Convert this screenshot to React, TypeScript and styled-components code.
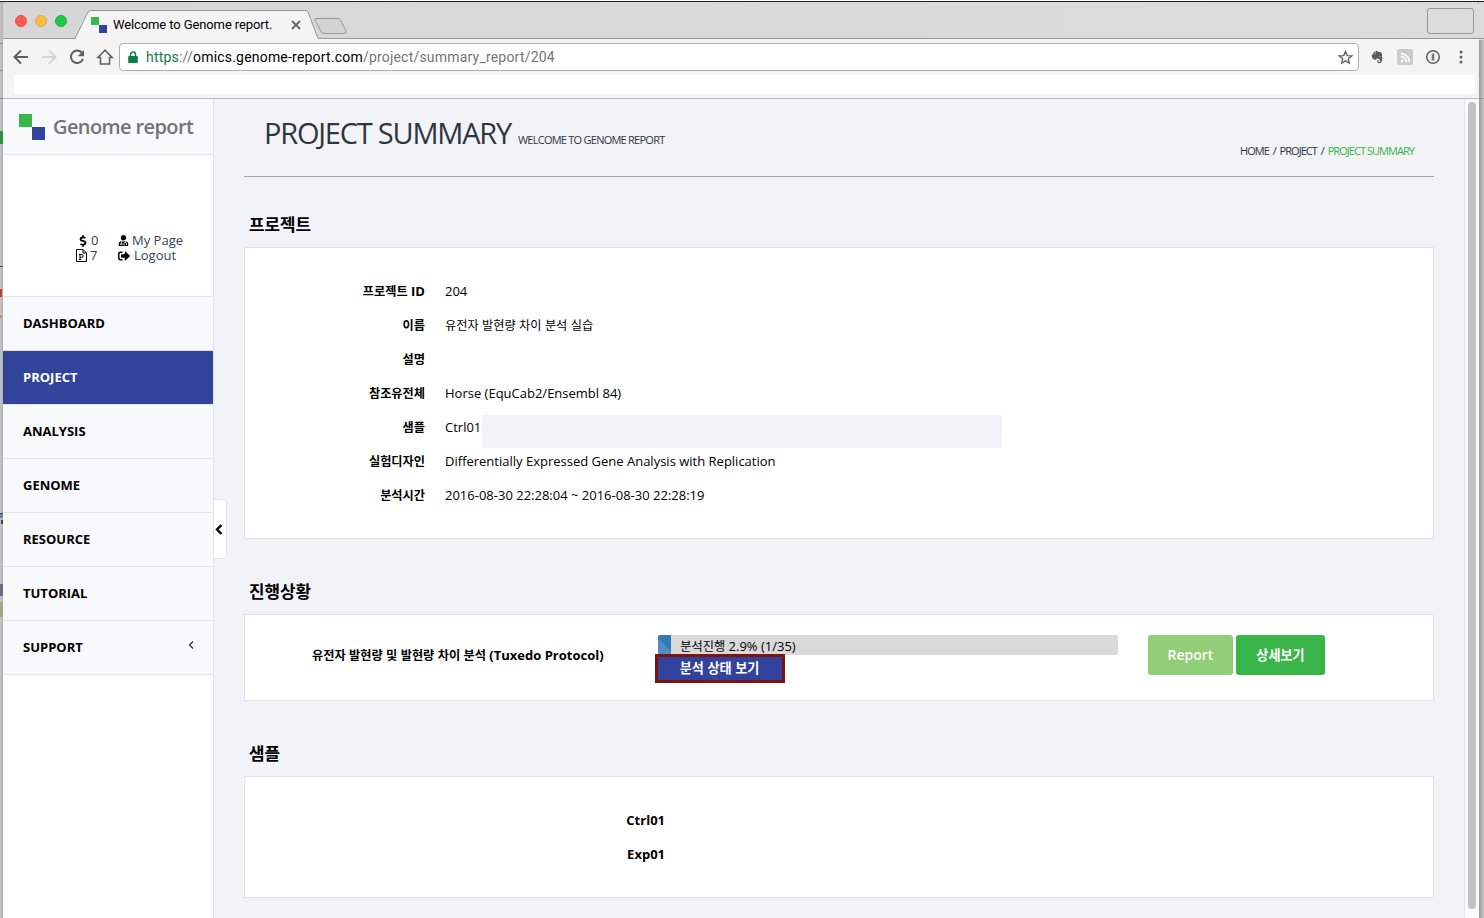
import React from 'react';
import styled, { createGlobalStyle, css } from 'styled-components';
import { FaDollarSign, FaUserMd, FaRss, FaSignOutAlt, FaEvernote } from 'react-icons/fa';

const Global = createGlobalStyle`
  * { box-sizing: border-box; }
  body { margin: 0; background: #c4c4c4; font-family: 'Open Sans', 'Noto Sans CJK KR', sans-serif; font-size: 13px; color: #000; }
`;

const Desktop = styled.div`
  height: 918px;
  overflow: hidden;
  padding: 2px 5px 0 3px;
  background:
    linear-gradient(#1c1c1c, #1c1c1c) 0 1px / 1484px 1px no-repeat,
    linear-gradient(#fff, #fff) 0 0 / 1484px 1px no-repeat,
    linear-gradient(#2c9346, #2c9346) 0 131px / 3px 13px no-repeat,
    linear-gradient(#4a4a40, #4a4a40) 0 266px / 3px 1px no-repeat,
    linear-gradient(#c03a35, #c03a35) 0 289px / 2px 8px no-repeat,
    linear-gradient(#c98a62, #c98a62) 0 315px / 2px 3px no-repeat,
    linear-gradient(#444, #444) 0 513px / 3px 1px no-repeat,
    linear-gradient(#5d86ad, #5d86ad) 0 514px / 3px 4px no-repeat,
    linear-gradient(#444, #444) 1px 520px / 2px 4px no-repeat,
    linear-gradient(#666f7a, #666f7a) 0 584px / 3px 12px no-repeat,
    linear-gradient(#a4a68c, #a4a68c) 0 602px / 3px 15px no-repeat,
    linear-gradient(#8a8a8a, #8a8a8a) 0 43px / 3px 1px no-repeat,
    linear-gradient(#8a8a8a, #8a8a8a) 0 70px / 3px 1px no-repeat,
    linear-gradient(#8a8a8a, #8a8a8a) 0 98px / 3px 1px no-repeat,
    linear-gradient(#999, #999) 1479px 38px / 5px 1px no-repeat,
    linear-gradient(#999, #999) 1479px 98px / 5px 1px no-repeat,
    linear-gradient(to right, #999, #ccc) 1479px 40px / 5px 878px no-repeat,
    linear-gradient(#dcdcdc, #dcdcdc) 1479px 2px / 5px 40px no-repeat,
    linear-gradient(to right, #c6c6c6, #b0b0b0) 0 0 / 3px 918px no-repeat,
    #c4c4c4;
`;
const Window = styled.div`
  height: 916px;
  display: flex;
  flex-direction: column;
  border-radius: 5px 5px 0 0;
  overflow: hidden;
  background: #f4f4f4;
`;
const TabBar = styled.div`
  height: 37px;
  flex: none;
  display: flex;
  background: linear-gradient(to right, #d6d6d6, #dcdcdc);
  border-bottom: 1px solid #979797;
`;
const Lights = styled.div`
  display: flex;
  gap: 8px;
  padding: 13px 0 0 12px;
  width: 72px;
`;
const Light = styled.i<{ $c: string; $b: string }>`
  width: 12px;
  height: 12px;
  border-radius: 50%;
  background: ${(p) => p.$c};
  border: 1px solid ${(p) => p.$b};
`;
const Tab = styled.div`
  position: relative;
  width: 243px;
  height: 37px;
  display: flex;
  align-items: center;
  padding: 8px 0 0 16px;
  font: 13px Roboto, sans-serif;
`;
const TabShape = styled.svg`
  position: absolute;
  left: 0;
  top: 0;
`;
const TabTitle = styled.span`
  position: relative;
  margin-left: 6px;
  width: 161px;
  white-space: nowrap;
  letter-spacing: -0.11px;
`;
const TabIcon = styled.svg`
  position: relative;
  flex: none;
`;
const NewTab = styled.svg`
  margin: 15px 0 0 -5px;
`;
const Spacer = styled.div`
  flex: 1;
`;
const ProfileBox = styled.div`
  width: 47px;
  height: 26px;
  margin: 6px 5px 0 0;
  border: 1px solid #979797;
  border-radius: 3px;
`;
const Toolbar = styled.div`
  height: 36px;
  flex: none;
  display: flex;
  align-items: center;
  padding-left: 9px;
`;
const NavIcon = styled.svg`
  flex: none;
  margin-right: 10px;
`;
const Address = styled.div`
  width: 1240px;
  height: 28px;
  margin-left: -5px;
  border: 1px solid #b0b0b0;
  border-radius: 4px;
  background: #fff;
  display: flex;
  align-items: center;
  padding: 0 5px 0 8px;
  font: 14px Roboto, sans-serif;
  color: #757575;
`;
const Url = styled.span`
  margin-left: 8px;
  flex: 1;
  white-space: nowrap;
  letter-spacing: 0.2px;
  b { font-weight: 400; color: #0b8043; }
  em { font-style: normal; color: #000; }
`;
const Extensions = styled.div`
  display: flex;
  align-items: center;
  margin-left: 11px;
  color: #5a5a5a;
`;
const RssBadge = styled.span`
  width: 16px;
  height: 16px;
  margin: 0 12px 0 13px;
  border-radius: 2px;
  background: #cbcbcb;
  color: #fff;
  display: grid;
  place-items: center;
`;
const MenuDots = styled.svg`
  margin-left: 18px;
`;
const BookmarkBar = styled.div`
  height: 24px;
  flex: none;
  border-bottom: 1px solid #b9b9bb;
  padding: 0 4px 4px 11px;
  &::before { content: ''; display: block; height: 19px; background: #fff; }
`;
const Page = styled.div`
  flex: 1;
  display: flex;
  min-height: 0;
  background: #f1f3f7;
`;
const Sidebar = styled.aside`
  position: relative;
  width: 211px;
  flex: none;
  background: #fff;
  border-right: 1px solid #e2e3e6;
`;
const Brand = styled.div`
  height: 56px;
  background: #f8f9fb;
  border-bottom: 1px solid #e2e3e5;
  display: flex;
  align-items: center;
  padding-left: 16px;
  font-size: 20px;
  font-weight: 600;
  color: #737476;
  span { margin-left: 8px; letter-spacing: -0.6px; white-space: nowrap; }
`;
const UserArea = styled.div`
  height: 142px;
  border-bottom: 1px solid #e2e3e5;
  padding: 78px 0 0 72px;
  display: grid;
  grid-template-columns: 43px 1fr;
  grid-auto-rows: 15px;
  line-height: 15px;
  color: #34425a;
`;
const UserItem = styled.span<{ $indent?: number; $gap: number }>`
  display: flex;
  align-items: center;
  gap: ${(p) => p.$gap}px;
  padding-left: ${(p) => p.$indent || 0}px;
  white-space: nowrap;
  svg { color: #000; flex: none; }
`;
const MenuItem = styled.div<{ $active?: boolean }>`
  height: 54px;
  display: flex;
  align-items: center;
  justify-content: space-between;
  padding: 0 19px 2px 20px;
  font-weight: 700;
  background: ${(p) => (p.$active ? '#32439b' : '#f8f9fb')};
  color: ${(p) => (p.$active ? '#fff' : '#000')};
  border-bottom: 1px solid #e2e3e5;
`;
const MenuChevron = styled.svg`
  margin-bottom: 4px;
`;
const Collapse = styled.div`
  position: absolute;
  left: 211px;
  top: 400px;
  width: 13px;
  height: 60px;
  border: 1px solid #e2e3e6;
  border-left: 0;
  border-radius: 0 5px 5px 0;
  background: #fff;
  padding: 24px 0 0 1px;
  svg { display: block; }
`;
const Main = styled.main`
  flex: 1;
  padding: 0 30px;
`;
const PageHead = styled.header`
  height: 78px;
  border-bottom: 1px solid #a3a5a7;
  display: flex;
  justify-content: space-between;
  padding: 14px 20px 0 20px;
`;
const Title = styled.h1`
  margin: 0;
  font-size: 29px;
  line-height: 40px;
  font-weight: 400;
  letter-spacing: -1.22px;
  color: #2f353f;
  white-space: nowrap;
  small { font-size: 11px; letter-spacing: -0.75px; margin-left: 7px; }
`;
const Crumbs = styled.nav`
  margin-top: 30px;
  font-size: 11px;
  line-height: 16px;
  letter-spacing: -0.95px;
  color: #2f353f;
  white-space: pre;
  b { font-weight: 400; color: #35b34a; }
`;
const SectionTitle = styled.h2<{ $top: number }>`
  margin: ${(p) => p.$top}px 0 0 5px;
  height: 24px;
  line-height: 26px;
  font-size: 18px;
  font-weight: 700;
`;
const Card = styled.section<{ $h: number; $pad?: number }>`
  height: ${(p) => p.$h}px;
  margin-top: 12px;
  background: #fff;
  border: 1px solid #e2e3e6;
  padding-top: ${(p) => p.$pad || 0}px;
`;
const Field = styled.div`
  position: relative;
  height: 34px;
  line-height: 34px;
  display: grid;
  grid-template-columns: 180px 1fr;
  column-gap: 20px;
`;
const Label = styled.span`
  font-weight: 700;
  text-align: right;
`;
const Value = styled.span`
  white-space: nowrap;
`;
const Mask = styled.i`
  position: absolute;
  left: 237px;
  top: 5px;
  width: 520px;
  height: 33px;
  background: #f1f3f7;
`;
const Progress = styled.div`
  display: flex;
  align-items: flex-start;
  padding-top: 20px;
`;
const Protocol = styled.strong`
  width: 413px;
  padding-left: 67px;
  line-height: 40px;
  white-space: nowrap;
`;
const Status = styled.div`
  width: 490px;
`;
const Bar = styled.div`
  width: 460px;
  height: 20px;
  border-radius: 2px;
  background: #d9d9d9;
  display: flex;
  overflow: hidden;
  line-height: 22px;
  > span { margin-left: 9px; }
`;
const Fill = styled.i`
  background: linear-gradient(45deg, #4f8dc3 50%, #337ab7 50%);
`;
const StateButton = styled.button`
  display: block;
  width: 130px;
  height: 29px;
  margin: -1px 0 0 -3px;
  position: relative;
  border: 3px solid #80130f;
  background: #32439b;
  color: #fff;
  font: 700 14px/20px 'Open Sans', 'Noto Sans CJK KR', sans-serif;
  padding: 0 1px 2px 0;
`;
const Button = styled.button<{ $w: number; $light?: boolean }>`
  width: ${(p) => p.$w}px;
  height: 40px;
  margin-right: 3px;
  border: 0;
  border-radius: 3px;
  padding: 0 0 1px;
  color: #fff;
  background: #3ab54a;
  font: 600 14px 'Open Sans', 'Noto Sans CJK KR', sans-serif;
  ${(p) => p.$light && css`background: #92ce77;`}
`;
const Sample = styled.div`
  height: 34px;
  line-height: 34px;
  width: 420px;
  text-align: right;
  font-weight: 700;
`;
const Track = styled.div`
  width: 15px;
  flex: none;
  border-left: 1px solid #e4e4e4;
  background: #fafafa;
  padding: 3px 0 0 3px;
`;
const Thumb = styled.div`
  width: 8px;
  height: 807px;
  border-radius: 4px;
  background: #c1c1c1;
`;
const Hangul = styled.span`
  font-size: 0.938em;
`;

const Ko = ({ children }: { children: string }) => (
  <span>
    {children.split(/([\uac00-\ud7a3]+)/).map((part, i) => (i % 2 ? <Hangul key={i}>{part}</Hangul> : part))}
  </span>
);

const fields = [
  ['프로젝트 ID', '204'],
  ['이름', '유전자 발현량 차이 분석 실습'],
  ['설명', ''],
  ['참조유전체', 'Horse (EquCab2/Ensembl 84)'],
  ['샘플', 'Ctrl01'],
  ['실험디자인', 'Differentially Expressed Gene Analysis with Replication'],
  ['분석시간', '2016-08-30 22:28:04 ~ 2016-08-30 22:28:19'],
];
const menu = ['DASHBOARD', 'PROJECT', 'ANALYSIS', 'GENOME', 'RESOURCE', 'TUTORIAL', 'SUPPORT'];

const Logo = ({ size }: { size: number }) => (
  <TabIcon width={size} height={size} viewBox="0 0 26 26">
    <path fill="#3ab54a" d="M0 0h13v13H0z" />
    <path fill="#32439b" d="M13 13h13v13H13z" />
  </TabIcon>
);

const Chrome = () => (
  <>
    <TabBar>
      <Lights>
        <Light $c="#fc5753" $b="#e8504c" />
        <Light $c="#fdbc40" $b="#e6a935" />
        <Light $c="#1fc84a" $b="#1bb042" />
      </Lights>
      <Tab>
        <TabShape width="243" height="37">
          <path d="M0 36.5 L13 10 Q14 8.5 16 8.5 H230 Q232 8.5 233 10 L243 36.5 V37 H0Z" fill="#f4f4f4" />
          <path d="M0 36.5 L13 10 Q14 8.5 16 8.5 H230 Q232 8.5 233 10 L243 36.5" fill="none" stroke="#979797" />
        </TabShape>
        <Logo size={16} />
        <TabTitle>Welcome to Genome report.</TabTitle>
        <TabIcon width="28" height="10" viewBox="0 0 28 10">
          <path d="M18 1l8 8M26 1l-8 8" stroke="#666" strokeWidth="1.8" />
        </TabIcon>
      </Tab>
      <NewTab width="36" height="18">
        <path d="M3 1.5 H24 Q26.500 1.500 27.500 3 L33 14 Q34 16.500 31 16.500 H12 Q9 16.500 8 14.500 L2 3 Q1.500 1.500 3 1.500Z" fill="#d4d4d4" stroke="#979797" />
      </NewTab>
      <Spacer />
      <ProfileBox />
    </TabBar>
    <Toolbar>
      <NavIcon width="18" height="18" viewBox="0 0 18 18" fill="none" stroke="#5f5f5f" strokeWidth="2">
        <path d="M16 9H3M9 2.500L2.500 9 9 15.500" />
      </NavIcon>
      <NavIcon width="18" height="18" viewBox="0 0 18 18" fill="none" stroke="#d5d5d5" strokeWidth="2">
        <path d="M2 9h13M9 2.500L15.500 9 9 15.500" />
      </NavIcon>
      <NavIcon width="18" height="18" viewBox="0 0 18 18">
        <path d="M14.200 5.200A6.200 6.200 0 1 0 15 10.800" fill="none" stroke="#5f5f5f" strokeWidth="2" />
        <path d="M16 2v6.300H9.700z" fill="#5f5f5f" />
      </NavIcon>
      <NavIcon width="18" height="18" viewBox="0 0 18 18">
        <path d="M9 2.200L1.800 9.500h2.700V16H13.500V9.500H16.200z" fill="none" stroke="#5f5f5f" strokeWidth="1.600" />
      </NavIcon>
      <Address>
        <svg width="10" height="13" viewBox="0 0 10 13">
          <path d="M1 5h8q.8 0 .8.800V11q0 .9-.8.900H1q-.8 0-.8-.9V5.800Q.2 5 1 5z" fill="#0b8043" />
          <path d="M2.500 5.500V3.500a2.500 2.500 0 0 1 5 0v2" fill="none" stroke="#0b8043" strokeWidth="1.500" />
        </svg>
        <Url>
          <b>https</b>://<em>omics.genome-report.com</em>/project/summary_report/204
        </Url>
        <svg width="15" height="15" viewBox="0 0 16 16">
          <path d="M8 1.500l1.900 4.400 4.700.4-3.600 3.100 1.100 4.700L8 11.600l-4.100 2.500L5 9.400 1.400 6.300l4.700-.4z" fill="none" stroke="#5f5f5f" strokeWidth="1.400" />
        </svg>
      </Address>
      <Extensions>
        <FaEvernote size={14} />
        <RssBadge><FaRss size={11} /></RssBadge>
        <svg width="16" height="16" viewBox="0 0 16 16">
          <circle cx="8" cy="8" r="6.300" fill="none" stroke="#5f5f5f" strokeWidth="1.500" />
          <path d="M6.700 4.500h2.600v7h-2.600z" fill="#777" />
        </svg>
        <MenuDots width="4" height="14" viewBox="0 0 4 14">
          <circle cx="2" cy="2" r="1.500" fill="#5f5f5f" />
          <circle cx="2" cy="7" r="1.500" fill="#5f5f5f" />
          <circle cx="2" cy="12" r="1.500" fill="#5f5f5f" />
        </MenuDots>
      </Extensions>
    </Toolbar>
    <BookmarkBar />
  </>
);

export default function App() {
  return (
    <Desktop>
      <Global />
      <Window>
        <Chrome />
        <Page>
          <Sidebar>
            <Brand>
              <Logo size={26} />
              <span>Genome report</span>
            </Brand>
            <UserArea>
              <UserItem $indent={2} $gap={2}><FaDollarSign size={12} />0</UserItem>
              <UserItem $gap={3}><FaUserMd size={11} />My Page</UserItem>
              <UserItem $indent={1} $gap={3}>
                <svg width="11" height="13" viewBox="0 0 11 13" fill="none" stroke="#000">
                  <path d="M.5.500h6.500l3.500 3.500v8.500H.500zM7 .5V4h3.500M4 10.500V5.500h1.700q1.600 0 1.600 1.400T5.700 8.300H4M3 5.500h1M3 10.500h2.200" />
                </svg>
                7
              </UserItem>
              <UserItem $gap={4}><FaSignOutAlt size={12} />Logout</UserItem>
            </UserArea>
            {menu.map((m) => (
              <MenuItem key={m} $active={m === 'PROJECT'}>
                {m}
                {m === 'SUPPORT' && (
                  <MenuChevron width="6" height="8" viewBox="0 0 6 8"><path d="M5 .5L1.500 4 5 7.500" fill="none" stroke="#222" strokeWidth="1.100" /></MenuChevron>
                )}
              </MenuItem>
            ))}
            <Collapse>
              <svg width="8" height="11" viewBox="0 0 8 11"><path d="M6.500 1L2 5.500 6.500 10" fill="none" stroke="#000" strokeWidth="2.400" /></svg>
            </Collapse>
          </Sidebar>
          <Main>
            <PageHead>
              <Title>PROJECT SUMMARY<small>WELCOME TO GENOME REPORT</small></Title>
              <Crumbs>HOME  /  PROJECT  /  <b>PROJECT SUMMARY</b></Crumbs>
            </PageHead>
            <SectionTitle $top={34}><Ko>프로젝트</Ko></SectionTitle>
            <Card $h={292} $pad={26}>
              {fields.map(([k, v]) => (
                <Field key={k}>
                  <Label><Ko>{k}</Ko></Label>
                  <Value><Ko>{v}</Ko></Value>
                  {k === '샘플' && <Mask />}
                </Field>
              ))}
            </Card>
            <SectionTitle $top={39}><Ko>진행상황</Ko></SectionTitle>
            <Card $h={87}>
              <Progress>
                <Protocol><Ko>유전자 발현량 및 발현량 차이 분석 (Tuxedo Protocol)</Ko></Protocol>
                <Status>
                  <Bar><Fill style={{ width: `${(460 * 2.9) / 100}px` }} /><Ko>분석진행 2.9% (1/35)</Ko></Bar>
                  <StateButton><Ko>분석 상태 보기</Ko></StateButton>
                </Status>
                <Button $w={85} $light>Report</Button>
                <Button $w={89}><Ko>상세보기</Ko></Button>
              </Progress>
            </Card>
            <SectionTitle $top={39}><Ko>샘플</Ko></SectionTitle>
            <Card $h={122} $pad={26}>
              <Sample>Ctrl01</Sample>
              <Sample>Exp01</Sample>
            </Card>
          </Main>
          <Track><Thumb /></Track>
        </Page>
      </Window>
    </Desktop>
  );
}
